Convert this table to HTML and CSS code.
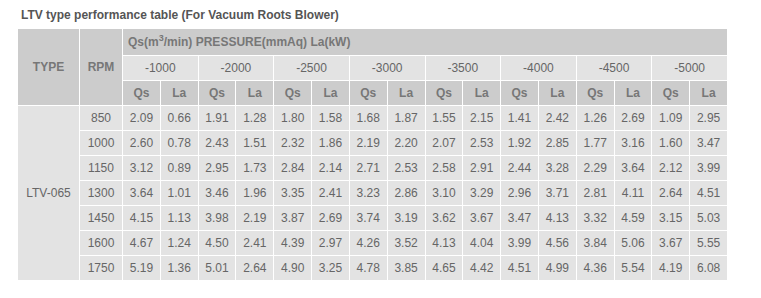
FILE: index.html
```html
<!DOCTYPE html>
<html>
<head>
<meta charset="utf-8">
<link rel="stylesheet" href="styles.css">
</head>
<body>
<div class="wrap">
  <div class="title">LTV type performance table (For Vacuum Roots Blower)</div>
  <table class="perf">
    <colgroup>
      <col class="c-type"><col class="c-rpm">
      <col><col><col><col><col><col><col><col><col><col><col><col><col><col><col><col>
    </colgroup>
    <thead>
      <tr class="h1">
        <th rowspan="3" class="dark">TYPE</th>
        <th rowspan="3" class="dark">RPM</th>
        <th colspan="16" class="dark left">Qs(m<sup>3</sup>/min) PRESSURE(mmAq) La(kW)</th>
      </tr>
      <tr class="h2">
        <th colspan="2" class="light">-1000</th>
        <th colspan="2" class="light">-2000</th>
        <th colspan="2" class="light">-2500</th>
        <th colspan="2" class="light">-3000</th>
        <th colspan="2" class="light">-3500</th>
        <th colspan="2" class="light">-4000</th>
        <th colspan="2" class="light">-4500</th>
        <th colspan="2" class="light">-5000</th>
      </tr>
      <tr class="h3">
        <th class="dark">Qs</th><th class="dark">La</th>
        <th class="dark">Qs</th><th class="dark">La</th>
        <th class="dark">Qs</th><th class="dark">La</th>
        <th class="dark">Qs</th><th class="dark">La</th>
        <th class="dark">Qs</th><th class="dark">La</th>
        <th class="dark">Qs</th><th class="dark">La</th>
        <th class="dark">Qs</th><th class="dark">La</th>
        <th class="dark">Qs</th><th class="dark">La</th>
      </tr>
    </thead>
    <tbody>
      <tr><td rowspan="7">LTV-065</td><td>850</td><td>2.09</td><td>0.66</td><td>1.91</td><td>1.28</td><td>1.80</td><td>1.58</td><td>1.68</td><td>1.87</td><td>1.55</td><td>2.15</td><td>1.41</td><td>2.42</td><td>1.26</td><td>2.69</td><td>1.09</td><td>2.95</td></tr>
      <tr><td>1000</td><td>2.60</td><td>0.78</td><td>2.43</td><td>1.51</td><td>2.32</td><td>1.86</td><td>2.19</td><td>2.20</td><td>2.07</td><td>2.53</td><td>1.92</td><td>2.85</td><td>1.77</td><td>3.16</td><td>1.60</td><td>3.47</td></tr>
      <tr><td>1150</td><td>3.12</td><td>0.89</td><td>2.95</td><td>1.73</td><td>2.84</td><td>2.14</td><td>2.71</td><td>2.53</td><td>2.58</td><td>2.91</td><td>2.44</td><td>3.28</td><td>2.29</td><td>3.64</td><td>2.12</td><td>3.99</td></tr>
      <tr><td>1300</td><td>3.64</td><td>1.01</td><td>3.46</td><td>1.96</td><td>3.35</td><td>2.41</td><td>3.23</td><td>2.86</td><td>3.10</td><td>3.29</td><td>2.96</td><td>3.71</td><td>2.81</td><td>4.11</td><td>2.64</td><td>4.51</td></tr>
      <tr><td>1450</td><td>4.15</td><td>1.13</td><td>3.98</td><td>2.19</td><td>3.87</td><td>2.69</td><td>3.74</td><td>3.19</td><td>3.62</td><td>3.67</td><td>3.47</td><td>4.13</td><td>3.32</td><td>4.59</td><td>3.15</td><td>5.03</td></tr>
      <tr><td>1600</td><td>4.67</td><td>1.24</td><td>4.50</td><td>2.41</td><td>4.39</td><td>2.97</td><td>4.26</td><td>3.52</td><td>4.13</td><td>4.04</td><td>3.99</td><td>4.56</td><td>3.84</td><td>5.06</td><td>3.67</td><td>5.55</td></tr>
      <tr><td>1750</td><td>5.19</td><td>1.36</td><td>5.01</td><td>2.64</td><td>4.90</td><td>3.25</td><td>4.78</td><td>3.85</td><td>4.65</td><td>4.42</td><td>4.51</td><td>4.99</td><td>4.36</td><td>5.54</td><td>4.19</td><td>6.08</td></tr>
    </tbody>
  </table>
</div>
</body>
</html>
```

FILE: styles.css
```css
html, body {
  margin: 0;
  padding: 0;
  background: #ffffff;
}
body {
  font-family: "Liberation Sans", Arial, sans-serif;
  font-size: 12px;
  color: #666666;
}
.wrap {
  padding: 8px 0 0 17px;
}
.title {
  font-size: 12px;
  font-weight: bold;
  color: #555555;
  line-height: 15px;
  height: 20px;
  padding-left: 4px;
}
.perf {
  border-collapse: separate;
  border-spacing: 1px;
  width: 711px;
  table-layout: fixed;
  background: #ffffff;
}
.c-type { width: 61px; }
.c-rpm { width: 42px; }
.perf th, .perf td {
  padding: 0;
  text-align: center;
  vertical-align: middle;
  white-space: nowrap;
  overflow: hidden;
}
.perf th {
  font-weight: bold;
  color: #777777;
}
.perf th.dark { background: #cccccc; }
.perf th.light { background: #e3e3e3; font-weight: normal; color: #666666; }
.perf th.left { text-align: left; padding-left: 5px; }
.perf sup { font-size: 9px; line-height: 0; vertical-align: 5px; }
.h1 { height: 26px; }
.h2 { height: 24px; }
.h3 { height: 24px; }
.perf td {
  background: #e3e3e3;
  height: 24px;
  color: #666666;
}
```
